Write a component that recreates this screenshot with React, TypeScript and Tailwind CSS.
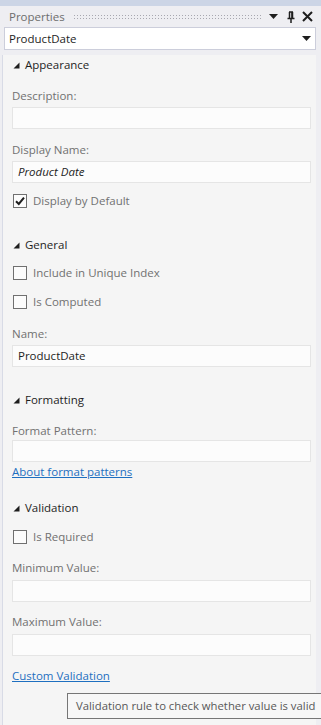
import React from "react";

const font = { fontFamily: '"Open Sans", "Noto Sans", sans-serif' };

function Caret({ className = "" }: { className?: string }) {
  return (
    <svg width="7" height="7" viewBox="0 0 7 7" className={className}>
      <polygon points="6.5,0.5 6.5,6.5 0.5,6.5" fill="#1e1e1e" />
    </svg>
  );
}

function SectionHeader({ title, className = "" }: { title: string; className?: string }) {
  return (
    <div className={`flex h-[20px] items-center ${className}`}>
      <Caret className="ml-[1px] mr-[5px]" />
      <span className="text-[11.5px] text-[#1e1e1e]">{title}</span>
    </div>
  );
}

function Label({ text, className = "" }: { text: string; className?: string }) {
  return <div className={`flex h-[16px] items-center text-[11.5px] text-[#717171] ${className}`}>{text}</div>;
}

function Field({ value, italic, className = "" }: { value?: string; italic?: boolean; className?: string }) {
  return (
    <div
      className={`flex h-[22px] items-center border border-[#e5e5e5] bg-[#fcfcfc] px-[5px] text-[11.5px] text-[#1e1e1e] ${
        italic ? "italic" : ""
      } ${className}`}
    >
      {value}
    </div>
  );
}

function Check({ label, checked, className = "" }: { label: string; checked?: boolean; className?: string }) {
  return (
    <div className={`flex h-[20px] items-center ${className}`}>
      <div className="ml-[1px] flex h-[14px] w-[14px] items-center justify-center border border-[#707070] bg-[#fcfcfc]">
        {checked && (
          <svg width="12" height="12" viewBox="0 0 12 12">
            <path d="M2 6.2 L4.8 9 L10 2.6" stroke="#1e1e1e" strokeWidth="2" fill="none" />
          </svg>
        )}
      </div>
      <span className="ml-[6px] text-[11.5px] text-[#717171]">{label}</span>
    </div>
  );
}

function Link({ text, className = "" }: { text: string; className?: string }) {
  return (
    <div className={`flex h-[16px] items-center text-[11.5px] text-[#1e6fc0] underline ${className}`}>{text}</div>
  );
}

export default function App() {
  return (
    <div className="relative h-[725px] w-[321px] overflow-hidden bg-[#eeeef2]" style={font}>
      <div className="h-[6px] bg-[#ccd5e6]" />
      {/* title bar */}
      <div className="flex h-[21px] items-center pl-[9px] pr-[8px]">
        <span className="text-[11.5px] text-[#6d6d6d]">Properties</span>
        <div className="ml-[8px] h-[6px] flex-1 bg-[radial-gradient(circle,#a8a8b0_0.7px,transparent_0.9px)] bg-[length:3px_3px]" />
        <svg width="9" height="5" viewBox="0 0 9 5" className="ml-[8px]">
          <polygon points="0,0 9,0 4.5,5" fill="#1e1e1e" />
        </svg>
        <svg width="10" height="12" viewBox="0 0 10 12" className="ml-[8px]">
          <path d="M3 1 H7 M3.5 1 V7 M6.5 1 V7 M1.5 7.5 H8.5 M5 7.5 V12" stroke="#1e1e1e" strokeWidth="1.5" fill="none" />
          <rect x="5.2" y="1" width="1.6" height="6" fill="#1e1e1e" />
        </svg>
        <svg width="11" height="11" viewBox="0 0 11 11" className="ml-[6px]">
          <path d="M1 1 L10 10 M10 1 L1 10" stroke="#1e1e1e" strokeWidth="2" />
        </svg>
      </div>
      {/* object picker */}
      <div className="ml-[4px] mr-[5px] flex h-[23px] items-center border border-[#cccedb] bg-white pl-[4px] pr-[4px]">
        <span className="flex-1 text-[11.5px] text-[#1e1e1e]">ProductDate</span>
        <svg width="9" height="5" viewBox="0 0 9 5">
          <polygon points="0,0 9,0 4.5,5" fill="#1e1e1e" />
        </svg>
      </div>
      {/* panel */}
      <div className="ml-[2px] mr-[5px] h-[675px] border-l border-[#d8dbe6] bg-[#f5f5f5] pl-[9px] pr-[5px]">
        <SectionHeader title="Appearance" className="mt-[5px]" />
        <Label text="Description:" className="mt-[13px]" />
        <Field className="mt-[3px]" />
        <Label text="Display Name:" className="mt-[13px]" />
        <Field className="mt-[3px]" value="Product Date" italic />
        <Check label="Display by Default" checked className="mt-[8px]" />

        <SectionHeader title="General" className="mt-[24px]" />
        <Check label="Include in Unique Index" className="mt-[8px]" />
        <Check label="Is Computed" className="mt-[9px]" />
        <Label text="Name:" className="mt-[14px]" />
        <Field className="mt-[3px]" value="ProductDate" />

        <SectionHeader title="Formatting" className="mt-[23px]" />
        <Label text="Format Pattern:" className="mt-[13px]" />
        <Field className="mt-[1px]" />
        <Link text="About format patterns" className="mt-[2px]" />

        <SectionHeader title="Validation" className="mt-[18px]" />
        <Check label="Is Required" className="mt-[9px]" />
        <Label text="Minimum Value:" className="mt-[13px]" />
        <Field className="mt-[4px]" />
        <Label text="Maximum Value:" className="mt-[12px]" />
        <Field className="mt-[4px]" />
        <Link text="Custom Validation" className="mt-[12px]" />
      </div>
      {/* tooltip */}
      <div className="absolute left-[67px] top-[693px] flex h-[26px] w-[262px] items-center whitespace-nowrap border border-[#767676] bg-[#f7f7f7] pl-[8px] text-[11.3px] text-[#575757]">
        Validation rule to check whether value is valid
      </div>
    </div>
  );
}
